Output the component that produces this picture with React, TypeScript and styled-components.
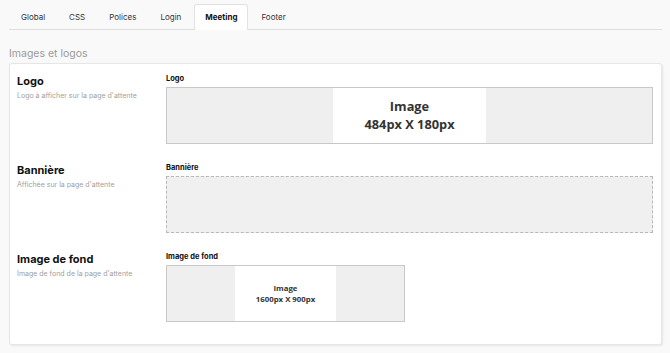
import styled, { createGlobalStyle } from "styled-components";

const GlobalStyle = createGlobalStyle`
  html, body {
    margin: 0;
    padding: 0;
    background: #f9f9f9;
    font-family: Inter, "Liberation Sans", sans-serif;
    color: #222;
  }
`;

interface ImageField {
  title: string;
  description: string;
  label: string;
  variant: "image" | "empty";
  boxWidth?: number;
  imageWidth?: number;
  imageText?: string[];
  large?: boolean;
}

const fields: ImageField[] = [
  {
    title: "Logo",
    description: "Logo à afficher sur la page d'attente",
    label: "Logo",
    variant: "image",
    imageWidth: 153,
    imageText: ["Image", "484px X 180px"],
    large: true,
  },
  {
    title: "Bannière",
    description: "Affichée sur la page d'attente",
    label: "Bannière",
    variant: "empty",
  },
  {
    title: "Image de fond",
    description: "Image de fond de la page d'attente",
    label: "Image de fond",
    variant: "image",
    boxWidth: 239,
    imageWidth: 101,
    imageText: ["Image", "1600px X 900px"],
  },
];

const tabs = ["Global", "CSS", "Polices", "Login", "Meeting", "Footer"];

const App = () => {
  return (
    <>
      <GlobalStyle />
      <Page>
        <TabBar>
          {tabs.map((tab) => (
            <Tab key={tab} $active={tab === "Meeting"}>
              {tab}
            </Tab>
          ))}
        </TabBar>
        <SectionTitle>Images et logos</SectionTitle>
        <Card>
          {fields.map((field) => (
            <Row key={field.title}>
              <Info>
                <FieldTitle>{field.title}</FieldTitle>
                <FieldDesc>{field.description}</FieldDesc>
              </Info>
              <Control>
                <Label>{field.label}</Label>
                {field.variant === "image" ? (
                  <ImageBox style={field.boxWidth ? { width: field.boxWidth } : undefined}>
                    <Placeholder style={{ width: field.imageWidth }} $large={field.large}>
                      {field.imageText?.map((line) => (
                        <span key={line}>{line}</span>
                      ))}
                    </Placeholder>
                  </ImageBox>
                ) : (
                  <DropZone />
                )}
              </Control>
            </Row>
          ))}
        </Card>
      </Page>
    </>
  );
};

const Page = styled.div`
  padding: 4px 8px 8px 9px;
`;

const TabBar = styled.div`
  display: flex;
  gap: 2px;
  padding-left: 1px;
  border-bottom: 1px solid #dedede;
`;

const Tab = styled.div<{ $active?: boolean }>`
  height: 24px;
  padding: 0 10px 1px;
  display: flex;
  align-items: center;
  font-size: 8px;
  font-weight: ${(p) => (p.$active ? 700 : 400)};
  color: ${(p) => (p.$active ? "#111" : "#333")};
  background: ${(p) => (p.$active ? "#fff" : "transparent")};
  border: 1px solid ${(p) => (p.$active ? "#e2e2e2" : "transparent")};
  border-bottom: none;
  border-radius: 3px 3px 0 0;
  margin-bottom: -1px;
`;

const SectionTitle = styled.h2`
  margin: 16px 0 1px;
  font-size: 10.5px;
  line-height: 16px;
  font-weight: 400;
  color: #9a9a9a;
`;

const Card = styled.div`
  background: #fff;
  border: 1px solid #e6e6e6;
  border-radius: 3px;
  box-shadow: 1px 1px 2px rgba(0, 0, 0, 0.08);
  padding: 10px 8px 22px 7px;
  display: flex;
  flex-direction: column;
  gap: 19px;
`;

const Row = styled.div`
  display: grid;
  grid-template-columns: 149px 1fr;
`;

const Info = styled.div`
  display: flex;
  flex-direction: column;
`;

const FieldTitle = styled.div`
  font-size: 11px;
  line-height: 14px;
  font-weight: 700;
  color: #111;
`;

const FieldDesc = styled.div`
  margin-top: 3px;
  font-size: 7px;
  line-height: 9px;
  color: #a0a0a0;
`;

const Control = styled.div`
  display: flex;
  flex-direction: column;
`;

const Label = styled.div`
  font-size: 7.5px;
  line-height: 10px;
  font-weight: 700;
  color: #111;
  margin-bottom: 3px;
`;

const ImageBox = styled.div`
  height: 57px;
  box-sizing: border-box;
  border: 1px solid #c8c8c8;
  background: #efefef;
  display: flex;
  justify-content: center;
`;

const Placeholder = styled.div<{ $large?: boolean }>`
  height: 100%;
  background: #fff;
  display: flex;
  flex-direction: column;
  align-items: center;
  justify-content: center;
  font-family: "Open Sans", "Noto Sans", sans-serif;
  font-weight: 700;
  color: #333;
  white-space: nowrap;
  font-size: ${(p) => (p.$large ? "12.8px" : "7.8px")};
  line-height: ${(p) => (p.$large ? "17.5px" : "10.5px")};
`;

const DropZone = styled.div`
  height: 57px;
  box-sizing: border-box;
  border: 1px dashed #b8b8b8;
  background: #f0f0f0;
`;

export default App;
